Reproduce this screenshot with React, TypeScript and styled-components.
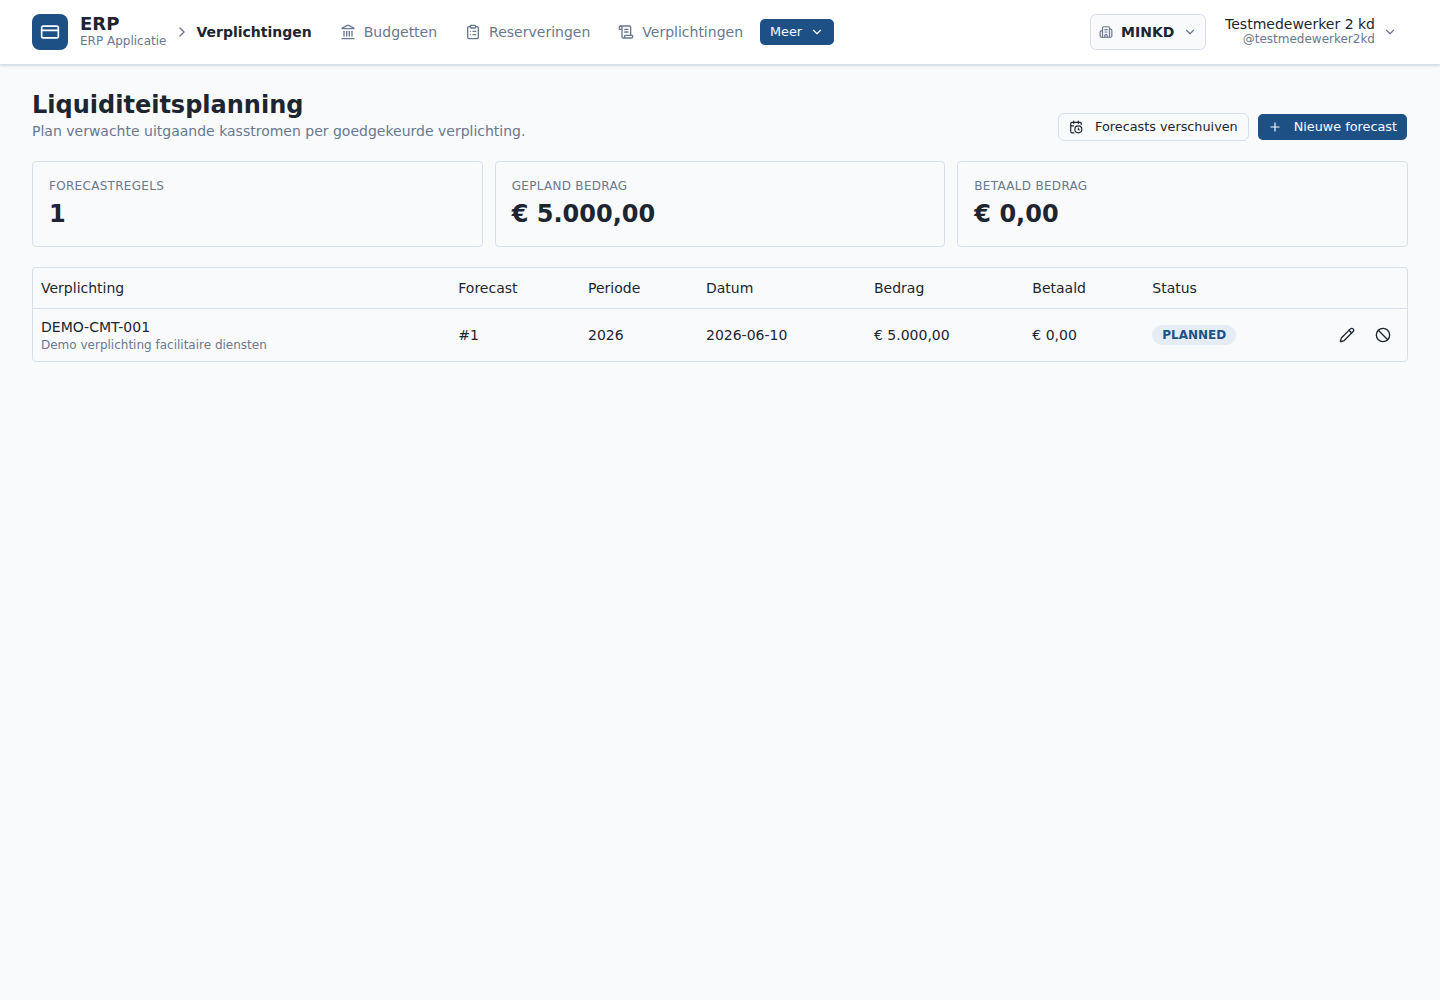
import React from "react";
import styled, { createGlobalStyle } from "styled-components";
import {
  Ban,
  Building2,
  CalendarClock,
  ChevronDown,
  ChevronRight,
  ClipboardList,
  CreditCard,
  Landmark,
  Pencil,
  Plus,
  ScrollText,
} from "lucide-react";

const color = {
  page: "#f9fafc",
  ink: "#1c2530",
  muted: "#68788f",
  line: "#d7dfe8",
  primary: "#1d5186",
  soft: "#e6ecf3",
};

const GlobalStyle = createGlobalStyle`
  *, *::before, *::after { box-sizing: border-box; }
  body {
    margin: 0;
    min-height: 100vh;
    background: ${color.page};
    color: ${color.ink};
    font-family: "DejaVu Sans", sans-serif;
    font-size: 14px;
    line-height: 20px;
  }
  h1, p { margin: 0; }
  button { font: inherit; color: inherit; cursor: pointer; }
  svg { display: block; flex-shrink: 0; }
`;

const Header = styled.header`
  display: flex;
  align-items: center;
  justify-content: space-between;
  height: 65px;
  padding: 0 32px;
  background: #fff;
  border-bottom: 1px solid ${color.line};
  box-shadow: 0 1px 3px rgba(0, 0, 0, 0.1), 0 1px 2px -1px rgba(0, 0, 0, 0.1);
`;

const HeaderGroup = styled.div`
  display: flex;
  align-items: center;
`;

const Logo = styled.div`
  display: grid;
  place-items: center;
  width: 36px;
  height: 36px;
  margin-right: 12px;
  border-radius: 8px;
  background: ${color.primary};
  color: #fff;
`;

const Brand = styled.div`
  display: flex;
  flex-direction: column;
  padding-bottom: 1px;
`;

const BrandName = styled.span`
  font-size: 18px;
  font-weight: 700;
  line-height: 18px;
`;

const Small = styled.span`
  color: ${color.muted};
  font-size: 12px;
  line-height: 16px;
`;

const Crumb = styled.div`
  display: flex;
  align-items: center;
  gap: 6px;
  margin-left: 8px;
  font-weight: 700;

  svg { color: ${color.muted}; }
`;

const Nav = styled.nav`
  display: flex;
  align-items: center;
  gap: 4px;
  margin-left: 16px;
`;

const NavItem = styled.a`
  display: flex;
  align-items: center;
  gap: 8px;
  padding: 8px 12px;
  color: ${color.muted};
`;

const Button = styled.button<{ $primary?: boolean; $gap?: number }>`
  display: inline-flex;
  align-items: center;
  gap: ${(p) => p.$gap ?? 12}px;
  height: 28px;
  padding: 0 10px;
  border: 1px solid ${(p) => (p.$primary ? "transparent" : color.line)};
  border-radius: 6px;
  background-color: ${(p) => (p.$primary ? color.primary : color.page)};
  background-clip: padding-box;
  color: ${(p) => (p.$primary ? "#f9fafc" : color.ink)};
  font-size: 12.8px;
  line-height: 18px;
  white-space: nowrap;
`;

const OrgButton = styled.button`
  display: flex;
  align-items: center;
  gap: 8px;
  width: 116px;
  height: 36px;
  padding: 0 8px;
  border: 1px solid ${color.line};
  border-radius: 6px;
  background: ${color.page};
  font-weight: 700;

  svg { color: ${color.muted}; }
  svg:last-child { margin-left: auto; }
`;

const UserMenu = styled.div`
  display: flex;
  align-items: center;
  gap: 8px;
  margin-left: 19px;
  padding-right: 11px;

  > svg { color: ${color.muted}; }
`;

const UserText = styled.div`
  display: flex;
  flex-direction: column;
  align-items: flex-end;
  line-height: 15px;

  ${Small} { line-height: 15px; }
`;

const Main = styled.main`
  display: flex;
  flex-direction: column;
  gap: 20px;
  padding: 24px 32px;
`;

const PageHead = styled.div`
  display: flex;
  justify-content: space-between;
  align-items: flex-end;
  height: 52px;
`;

const Title = styled.h1`
  font-size: 24px;
  font-weight: 700;
  line-height: 32px;
`;

const Subtitle = styled.p`
  color: ${color.muted};
`;

const Actions = styled.div`
  display: flex;
  align-items: center;
  gap: 8px;
`;

const Stats = styled.section`
  display: grid;
  grid-template-columns: repeat(3, 1fr);
  gap: 12px;
`;

const Stat = styled.div`
  height: 86px;
  padding: 16px;
  border: 1px solid ${color.line};
  border-radius: 4px;
`;

const StatLabel = styled.div`
  color: ${color.muted};
  font-size: 12px;
  letter-spacing: 0.3px;
  line-height: 16px;
  text-transform: uppercase;
`;

const StatValue = styled.div`
  margin-top: 4px;
  font-size: 24px;
  font-weight: 700;
  line-height: 32px;
`;

const TableBox = styled.section`
  border: 1px solid ${color.line};
  border-radius: 4px;
  overflow: hidden;
`;

const Table = styled.table`
  width: 100%;
  table-layout: fixed;
  border-collapse: separate;
  border-spacing: 0;
`;

const HeadCell = styled.th<{ $width?: number }>`
  width: ${(p) => (p.$width ? `${p.$width}px` : "auto")};
  height: 41px;
  padding: 0 8px;
  border-bottom: 1px solid ${color.line};
  font-weight: 400;
  text-align: left;
`;

const Cell = styled.td`
  height: 52px;
  padding: 0 8px;
`;

const Description = styled.div`
  color: ${color.muted};
  font-size: 12px;
  line-height: 16px;
`;

const Badge = styled.span`
  display: flex;
  width: fit-content;
  padding: 2px 10px;
  border-radius: 999px;
  background: ${color.soft};
  color: ${color.primary};
  font-size: 12px;
  font-weight: 700;
  line-height: 16px;
`;

const RowActions = styled.div`
  display: flex;
  justify-content: flex-end;
  gap: 4px;
`;

const IconButton = styled.button`
  display: grid;
  place-items: center;
  width: 32px;
  height: 32px;
  padding: 0;
  border: 0;
  background: transparent;
`;

const navItems = [
  { label: "Budgetten", Icon: Landmark },
  { label: "Reserveringen", Icon: ClipboardList },
  { label: "Verplichtingen", Icon: ScrollText },
];

const stats = [
  { label: "Forecastregels", value: "1" },
  { label: "Gepland bedrag", value: "€ 5.000,00" },
  { label: "Betaald bedrag", value: "€ 0,00" },
];

const columns = [
  { label: "Verplichting", width: 417.3 },
  { label: "Forecast", width: 129.7 },
  { label: "Periode", width: 118 },
  { label: "Datum", width: 168 },
  { label: "Bedrag", width: 158.3 },
  { label: "Betaald", width: 120 },
  { label: "Status", width: 130 },
  { label: "" },
];

export default function App() {
  return (
    <>
      <GlobalStyle />
      <Header>
        <HeaderGroup>
          <Logo>
            <CreditCard size={20} />
          </Logo>
          <Brand>
            <BrandName>ERP</BrandName>
            <Small>ERP Applicatie</Small>
          </Brand>
          <Crumb>
            <ChevronRight size={16} />
            <span>Verplichtingen</span>
          </Crumb>
          <Nav>
            {navItems.map(({ label, Icon }) => (
              <NavItem key={label}>
                <Icon size={16} />
                {label}
              </NavItem>
            ))}
            <Button $primary $gap={8}>
              Meer
              <ChevronDown size={14} />
            </Button>
          </Nav>
        </HeaderGroup>
        <HeaderGroup>
          <OrgButton>
            <Building2 size={14} />
            MINKD
            <ChevronDown size={14} />
          </OrgButton>
          <UserMenu>
            <UserText>
              <span>Testmedewerker 2 kd</span>
              <Small>@testmedewerker2kd</Small>
            </UserText>
            <ChevronDown size={14} />
          </UserMenu>
        </HeaderGroup>
      </Header>
      <Main>
        <PageHead>
          <div>
            <Title>Liquiditeitsplanning</Title>
            <Subtitle>Plan verwachte uitgaande kasstromen per goedgekeurde verplichting.</Subtitle>
          </div>
          <Actions>
            <Button>
              <CalendarClock size={14} />
              Forecasts verschuiven
            </Button>
            <Button $primary>
              <Plus size={14} />
              Nieuwe forecast
            </Button>
          </Actions>
        </PageHead>
        <Stats>
          {stats.map((s) => (
            <Stat key={s.label}>
              <StatLabel>{s.label}</StatLabel>
              <StatValue>{s.value}</StatValue>
            </Stat>
          ))}
        </Stats>
        <TableBox>
          <Table>
            <thead>
              <tr>
                {columns.map((c, i) => (
                  <HeadCell key={i} $width={c.width}>
                    {c.label}
                  </HeadCell>
                ))}
              </tr>
            </thead>
            <tbody>
              <tr>
                <Cell>
                  <div>DEMO-CMT-001</div>
                  <Description>Demo verplichting facilitaire diensten</Description>
                </Cell>
                <Cell>#1</Cell>
                <Cell>2026</Cell>
                <Cell>2026-06-10</Cell>
                <Cell>€ 5.000,00</Cell>
                <Cell>€ 0,00</Cell>
                <Cell>
                  <Badge>PLANNED</Badge>
                </Cell>
                <Cell>
                  <RowActions>
                    <IconButton aria-label="Bewerken">
                      <Pencil size={16} />
                    </IconButton>
                    <IconButton aria-label="Annuleren">
                      <Ban size={16} />
                    </IconButton>
                  </RowActions>
                </Cell>
              </tr>
            </tbody>
          </Table>
        </TableBox>
      </Main>
    </>
  );
}
